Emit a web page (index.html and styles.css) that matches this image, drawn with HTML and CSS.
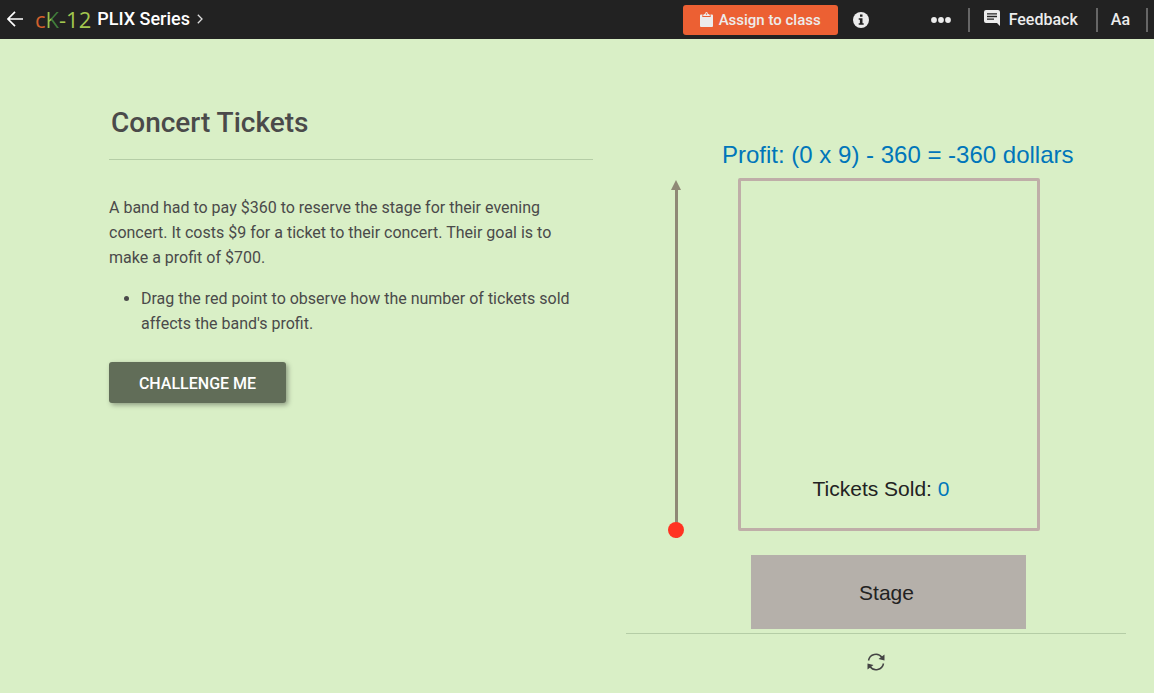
FILE: index.html
```html
<!DOCTYPE html>
<html lang="en">
<head>
    <meta charset="UTF-8">
    <meta name="viewport" content="width=device-width, initial-scale=1.0">
    <title>Concert Tickets - PLIX Series</title>
    <link rel="stylesheet" href="styles.css">
</head>
<body>

    <!-- Top bar -->
    <header class="topbar">
        <nav class="topbar-left">
            <a class="back-link" href="#" aria-label="Back">
                <svg width="16" height="16" viewBox="0 0 16 16" fill="none" stroke="#ffffff" stroke-width="1.7">
                    <path d="M8 .8.9 8 8 15.200M1 8h15"/>
                </svg>
            </a>
            <a class="logo" href="#"><span class="logo-c">c</span><span class="logo-k">K</span><span class="logo-num">-12</span></a>
            <a class="series-link" href="#">PLIX Series</a>
            <svg class="chevron" width="6" height="10" viewBox="0 0 6 10" fill="none" stroke="#dddddd" stroke-width="1.3">
                <path d="M.8.8 5 5 .8 9.2"/>
            </svg>
        </nav>

        <div class="topbar-center">
            <button class="assign-button" type="button">
                <svg width="13" height="15" viewBox="0 0 13 15" fill="#ececec">
                    <path d="M1 2.5h1.600L2.200 5h8.600l-.4-2.500H12q1 0 1 1V14q0 1-1 1H1q-1 0-1-1V3.500q0-1 1-1Z"/>
                    <path d="M3 4q0-2 2-2.200Q5.300 0 6.500 0T8 1.800q2 .2 2 2.200ZM6.500 1.200a.7.7 0 1 0 .01 0Z" fill-rule="evenodd"/>
                </svg>
                Assign to class
            </button>
            <button class="icon-button" type="button" aria-label="Information">
                <svg width="16" height="16" viewBox="0 0 16 16">
                    <circle cx="8" cy="8" r="8" fill="#ececec"/>
                    <path d="M7 2.500h2.500v2.200H7ZM5.700 6.200h3.800v5h1.200v1.600H5.700v-1.600h1.200V7.800H5.700Z" fill="#222222"/>
                </svg>
            </button>
        </div>

        <div class="topbar-right">
            <button class="menu-button more-button" type="button" aria-label="More">
                <svg width="20" height="6" viewBox="0 0 20 6" fill="#ececec">
                    <circle cx="3" cy="3" r="2.900"/><circle cx="10" cy="3" r="2.900"/><circle cx="17" cy="3" r="2.900"/>
                </svg>
            </button>
            <button class="menu-button feedback-button" type="button">
                <svg class="comment-icon" width="16" height="16" viewBox="0 0 16 16">
                    <path d="M2 0h12q2 0 2 2v14l-3-3H2q-2 0-2-2V2Q0 0 2 0Z" fill="#ececec"/>
                    <path d="M3 3.800h10M3 6.500h10M3 9.200h7" stroke="#222222" stroke-width="1.300"/>
                </svg>
                Feedback
            </button>
            <button class="menu-button font-button" type="button">Aa</button>
        </div>
    </header>

    <main class="container">
        <!-- Question -->
        <section class="question">
            <h1>Concert Tickets</h1>
            <div class="question-text">
                <p>A band had to pay $360 to reserve the stage for their evening concert. It costs $9 for a ticket to their concert. Their goal is to make a profit of $700.</p>
                <ul>
                    <li>Drag the red point to observe how the number of tickets sold affects the band's profit.</li>
                </ul>
            </div>
            <button class="challenge-button" type="button">CHALLENGE ME</button>
        </section>

        <!-- Interactive -->
        <section class="interactive">
            <div class="graph">
                <p class="profit">Profit: (<span id="soldInProfit">0</span> x 9) - 360 = <span id="profit">-360</span> dollars</p>
                <div class="slider">
                    <svg class="arrow-head" width="10" height="10" viewBox="0 0 10 10" fill="#8f8976">
                        <path d="M5 0l5 10H0z"/>
                    </svg>
                    <input type="range" id="ticketSlider" min="0" max="120" value="0" aria-label="Tickets sold">
                </div>
                <div class="audience">
                    <p>Tickets Sold: <span class="sold" id="sold">0</span></p>
                </div>
                <div class="stage">Stage</div>
            </div>
            <div class="controls">
                <button class="icon-button" type="button" id="resetButton" aria-label="Reset">
                    <svg width="18" height="18" viewBox="0 0 18 18" fill="none" stroke="#444444" stroke-width="1.500">
                        <path d="M1.500 7.500A7.500 7.500 0 0 1 15 4.500M16.500 10.500A7.500 7.500 0 0 1 3 13.500"/>
                        <path d="M17.500 1.500v6l-6-1.500zM.5 16.500v-6l6 1.500z" fill="#444444" stroke="none"/>
                    </svg>
                </button>
            </div>
        </section>
    </main>

    <script>
        const slider = document.getElementById('ticketSlider');

        // Update the profit line and the number of tickets
        function update() {
            const sold = Number(slider.value);
            document.getElementById('sold').textContent = sold;
            document.getElementById('soldInProfit').textContent = sold;
            document.getElementById('profit').textContent = sold * 9 - 360;
        }

        slider.addEventListener('input', update);

        document.getElementById('resetButton').addEventListener('click', function() {
            slider.value = 0;
            update();
        });
    </script>
</body>
</html>
```
FILE: styles.css
```css
* {
    box-sizing: border-box;
}

body {
    font-family: Roboto, sans-serif;
    background-color: #d9efc6;
    color: #4a4a4a;
    margin: 0;
}

button {
    font-family: inherit;
    border: none;
    padding: 0;
    background: none;
    cursor: pointer;
}

a {
    color: white;
    text-decoration: none;
}

/* Top bar */
.topbar {
    display: flex;
    align-items: center;
    height: 39px;
    background-color: #222222;
}

.topbar-left {
    display: flex;
    flex: 1;
    align-items: center;
    padding: 0 0 2px 7px;
}

.back-link {
    display: flex;
    margin-right: 12px;
}

.logo {
    font-family: "Open Sans", sans-serif;
    font-size: 22px;
    line-height: 36px;
    margin-right: 6px;
}

.logo-c {
    color: #d2602c;
}

.logo-k {
    color: transparent;
    background: linear-gradient(90deg, #9cc44c 35%, #3f7d3a 45%);
    background-clip: text;
    -webkit-background-clip: text;
}

.logo-num {
    color: #a3c64f;
}

.series-link {
    font-size: 18px;
    font-weight: 500;
}

.chevron {
    margin-left: 7px;
}

.topbar-center {
    display: flex;
    align-items: center;
    gap: 15px;
}

.assign-button {
    display: flex;
    align-items: center;
    justify-content: center;
    gap: 6px;
    width: 155px;
    height: 30px;
    border-radius: 3px;
    background-color: #ec6033;
    color: #ececec;
    font-size: 15px;
    font-weight: 500;
}

.icon-button {
    display: flex;
}

.topbar-right {
    display: flex;
    align-items: center;
    margin-left: 48px;
    padding-right: 6px;
}

.menu-button {
    display: flex;
    align-items: center;
    height: 24px;
    padding: 0 14px;
    border-right: 2px solid #666666;
    color: #ececec;
    font-size: 16px;
    font-weight: 500;
}

.more-button {
    padding-right: 17px;
}

.feedback-button {
    gap: 9px;
    padding-right: 18px;
}

.comment-icon {
    margin-bottom: 3px;
}

.font-button {
    padding: 0 16px 0 13px;
}

/* Two columns */
.container {
    display: grid;
    grid-template-columns: 484fr 500fr;
    gap: 33px;
    padding: 0 28px 0 109px;
}

/* Question */
.question {
    padding-top: 65px;
}

h1 {
    margin: 0 0 35px;
    padding: 0 2px 18px;
    border-bottom: 1px solid #b5cda6;
    font-size: 28px;
    font-weight: 500;
    line-height: 37px;
}

.question-text {
    font-size: 16px;
    line-height: 25px;
}

.question-text p {
    margin: 0 0 16px;
}

.question-text ul {
    margin: 0 0 26px;
    padding-left: 32px;
}

.challenge-button {
    width: 177px;
    height: 41px;
    padding-top: 2px;
    border-radius: 3px;
    background-color: #616d58;
    box-shadow: 2px 2px 5px rgba(0, 0, 0, 0.35);
    color: white;
    font-size: 16px;
    font-weight: 500;
}

/* Interactive */
.interactive {
    padding-top: 101px;
}

.graph {
    display: grid;
    grid-template-columns: 16px 302px;
    column-gap: 54px;
    padding-left: 42px;
    padding-bottom: 4px;
    border-bottom: 1px solid #b5cda6;
    font-family: "Liberation Sans", Arial, sans-serif;
    color: #222222;
}

.graph p {
    margin: 0;
}

.graph .profit {
    grid-column: 1 / -1;
    margin-bottom: 8px;
    padding-left: 54px;
    color: #0076ba;
    font-size: 24px;
    line-height: 30px;
    white-space: nowrap;
}

.slider {
    display: flex;
    flex-direction: column;
    align-items: center;
    height: 360px;
    padding-top: 2px;
}

.arrow-head {
    flex-shrink: 0;
}

.slider input {
    flex: 1;
    min-height: 0;
    width: 16px;
    margin: 0;
    appearance: none;
    -webkit-appearance: none;
    writing-mode: vertical-lr;
    direction: rtl;
    background: linear-gradient(#8f8976, #8f8976) center / 3px 100% no-repeat;
    cursor: pointer;
}

.slider input::-webkit-slider-thumb {
    -webkit-appearance: none;
    width: 16px;
    height: 16px;
    border-radius: 50%;
    background-color: #ff3322;
}

.audience {
    display: flex;
    align-items: flex-end;
    justify-content: center;
    height: 353px;
    padding: 0 16px 25px 0;
    border: 3px solid #bfaea8;
    border-radius: 2px;
    font-size: 21px;
    line-height: 28px;
}

.sold {
    color: #0076ba;
}

.stage {
    grid-column: 2;
    display: flex;
    align-items: center;
    justify-content: center;
    width: 275px;
    height: 74px;
    margin: 17px 0 0 13px;
    padding: 2px 4px 0 0;
    background-color: #b5b0aa;
    font-size: 21px;
}

.controls {
    display: flex;
    justify-content: center;
    padding: 19px 0;
}
```
